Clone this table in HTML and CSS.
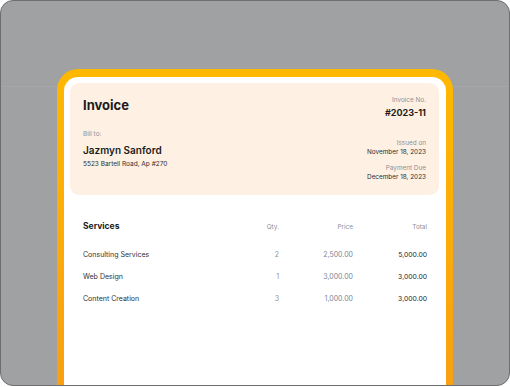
FILE: index.html
```html
<!DOCTYPE html>
<html lang="en">
<head>
<meta charset="utf-8">
<title>Invoice</title>
<link rel="stylesheet" href="styles.css">
</head>
<body>
<div class="frame">
  <div class="device">
    <div class="sheet">
      <div class="card">
        <div class="card-top">
          <h1 class="title">Invoice</h1>
          <div class="meta">
            <div class="label">Invoice No.</div>
            <div class="number">#2023-11</div>
          </div>
        </div>
        <div class="card-bottom">
          <div class="bill">
            <div class="label">Bill to:</div>
            <div class="name">Jazmyn Sanford</div>
            <div class="addr">5523 Bartell Road, Ap #270</div>
          </div>
          <div class="dates">
            <div class="label">Issued on</div>
            <div class="date">November 18, 2023</div>
            <div class="label gap">Payment Due</div>
            <div class="date">December 18, 2023</div>
          </div>
        </div>
      </div>
      <div class="services">
        <div class="row head">
          <div class="svc-title">Services</div>
          <div class="h num">Qty.</div>
          <div class="h num">Price</div>
          <div class="h num">Total</div>
        </div>
        <div class="row item">
          <div class="desc">Consulting Services</div>
          <div class="qty num">2</div>
          <div class="price num">2,500.00</div>
          <div class="total num">5,000.00</div>
        </div>
        <div class="row item">
          <div class="desc">Web Design</div>
          <div class="qty num">1</div>
          <div class="price num">3,000.00</div>
          <div class="total num">3,000.00</div>
        </div>
        <div class="row item">
          <div class="desc">Content Creation</div>
          <div class="qty num">3</div>
          <div class="price num">1,000.00</div>
          <div class="total num">3,000.00</div>
        </div>
      </div>
    </div>
  </div>
</div>
</body>
</html>
```

FILE: styles.css
```css
* { box-sizing: border-box; }
html, body { margin: 0; padding: 0; background: #ffffff; }
body { font-family: Inter, "Noto Sans", sans-serif; color: #1d1e22; }

.frame {
  width: 510px;
  height: 386px;
  border: 1px solid #6d6e71;
  border-radius: 13px;
  overflow: hidden;
  background:
    linear-gradient(to bottom, transparent 85px, #a6a7a9 85px, #a6a7a9 86px, transparent 86px),
    #a0a1a3;
  padding: 68px 0 0 56px;
  display: flex;
}

.device {
  width: 396px;
  border-radius: 21px 21px 0 0;
  background: linear-gradient(to bottom, #ffb800 0%, #fdac08 50%, #f99f12 100%);
  padding: 8px 7px 0 7px;
  display: flex;
}

.sheet {
  flex: 1;
  background: #ffffff;
  border-radius: 14px 14px 0 0;
  padding: 6px 7px 0 6px;
}

.card {
  background: #fef1e3;
  border-radius: 9px;
  padding: 13px 13px 13px 13px;
  height: 112px;
}

.card-top {
  display: flex;
  justify-content: space-between;
  align-items: flex-start;
}

.title {
  margin: 0;
  font-size: 13px;
  line-height: 17px;
  font-weight: 700;
  color: #1b1c20;
  padding-top: 1px;
}

.meta, .dates { text-align: right; }

.label {
  font-size: 6.4px;
  line-height: 9px;
  color: #8d9098;
}

.number {
  margin-top: 2px;
  font-size: 9px;
  line-height: 12px;
  font-weight: 700;
  color: #1b1c20;
}

.card-bottom {
  display: flex;
  justify-content: space-between;
  align-items: flex-start;
  margin-top: 11px;
}

.name {
  margin-top: 5px;
  font-size: 10px;
  line-height: 12px;
  font-weight: 600;
  color: #1b1c20;
}

.addr {
  margin-top: 4px;
  font-size: 6.5px;
  line-height: 9px;
  color: #2c2d31;
}

.dates { padding-top: 9px; }

.date {
  font-size: 6.4px;
  line-height: 9px;
  color: #2c2d31;
}

.label.gap { margin-top: 7px; }

.services {
  padding: 26px 12px 0 13px;
}

.row {
  display: grid;
  grid-template-columns: 1fr 74px 74px 74px;
  align-items: baseline;
}

.row.item {
  margin-top: 12px;
  font-size: 7px;
  line-height: 10px;
}

.row.head + .row.item { margin-top: 18px; }

.svc-title {
  font-size: 8.5px;
  line-height: 11px;
  font-weight: 700;
  color: #1b1c20;
}

.h {
  font-size: 6.4px;
  line-height: 9px;
  color: #8d9098;
}

.num { text-align: right; }

.desc { color: #2f3034; }
.qty { color: #8d939c; }
.price { color: #7a8698; }
.total { color: #26272b; font-size: 6.8px; }
```
